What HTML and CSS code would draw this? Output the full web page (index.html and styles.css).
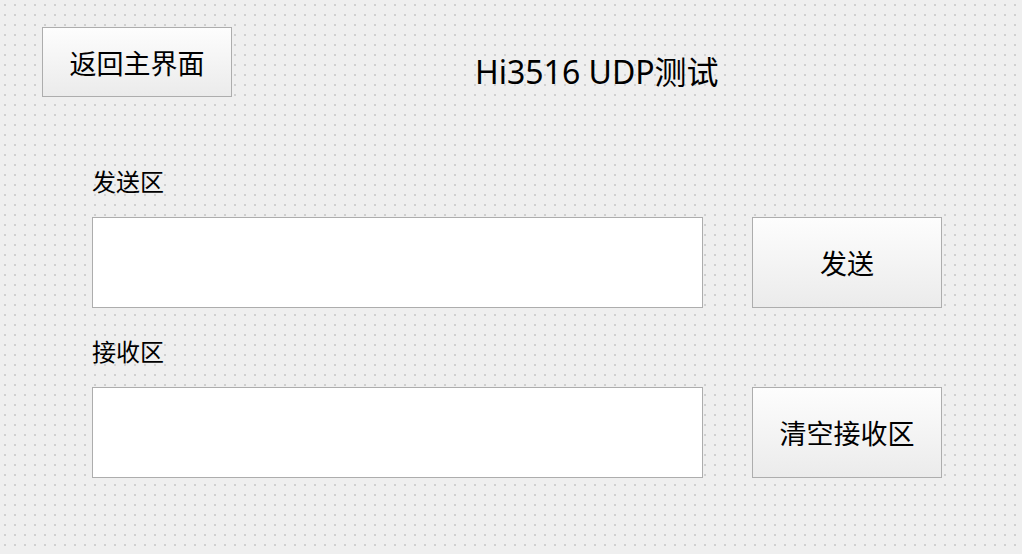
FILE: index.html
```html
<!doctype html>
<html lang="zh-CN">
<head>
<meta charset="utf-8">
<title>Hi3516 UDP测试</title>
<link rel="stylesheet" href="styles.css">
</head>
<body>

<!-- top bar -->
<header class="top">
  <button class="btn btn-back">返回主界面</button>
  <h1 class="title">Hi3516 UDP测试</h1>
</header>

<!-- send / receive areas -->
<main class="form">
  <section class="area">
    <label class="area-label">发送区</label>
    <div class="area-row">
      <textarea class="box"></textarea>
      <button class="btn">发送</button>
    </div>
  </section>

  <section class="area">
    <label class="area-label">接收区</label>
    <div class="area-row">
      <textarea class="box" readonly></textarea>
      <button class="btn">清空接收区</button>
    </div>
  </section>
</main>

</body>
</html>
```

FILE: styles.css
```css
:root{
  --bg:     #efefef;   /* form background */
  --dot:    #c6c6c6;   /* designer grid dots */
  --line:   #adadad;   /* widget borders */
  --txt:    #000;
}

* {
  box-sizing: border-box;
  margin: 0;
  padding: 0;
}
body {
  font-family: "Noto Sans", "Noto Sans CJK SC", sans-serif;
  color: var(--txt);
  background-color: var(--bg);
  background-image: radial-gradient(circle at 5px 5px, var(--dot) 0.6px, transparent 1.1px);
  background-size: 10px 10px;
  width: 1022px;
  height: 554px;
  overflow: hidden;
}

/* ── buttons ───────────────────────────────────────────────────── */
.btn {
  font-family: inherit;
  font-size: 27px;
  color: var(--txt);
  width: 190px;
  border: 1px solid var(--line);
  background: linear-gradient(#fdfdfd, #f4f4f4 50%, #ebebeb);
  cursor: pointer;
}

/* ── top bar ───────────────────────────────────────────────────── */
.top {
  display: flex;
  align-items: center;
  padding: 27px 0 0 42px;
}
.btn-back {
  height: 70px;
}
.title {
  font-size: 32px;
  font-weight: 400;
  margin: 16px 0 0 243px;
}

/* ── send / receive areas ──────────────────────────────────────── */
.form {
  display: grid;
  gap: 32px;
  margin: 73px 0 0 92px;
}
.area {
  display: grid;
  gap: 23px;
}
.area-label {
  font-size: 24px;
  line-height: 24px;
}
.area-row {
  display: grid;
  grid-template-columns: 611px 190px;
  column-gap: 49px;
  height: 91px;
}
.box {
  background: #fff;
  border: 1px solid var(--line);
  resize: none;
  outline: none;
  font-family: inherit;
}
```
